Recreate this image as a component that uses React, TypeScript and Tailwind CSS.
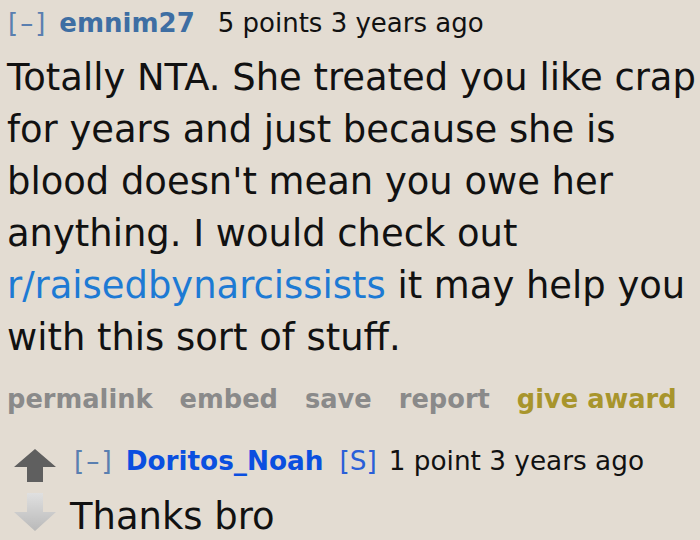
import React from "react";

const font = { fontFamily: '"DejaVu Sans", Verdana, sans-serif' };

export default function App() {
  return (
    <div
      className="w-[700px] h-[540px] overflow-hidden bg-[#e3dcd2] text-[#111]"
      style={font}
    >
      <div className="pl-[8px] pt-[5px]">
        <div className="flex items-baseline text-[26px] leading-[36px] whitespace-nowrap">
          <span className="text-[#5a7fb0] tracking-[2px]">[–]</span>
          <span className="ml-[12px] font-bold text-[#3e6ea3]">emnim27</span>
          <span className="ml-[23px] text-[#111]">5 points 3 years ago</span>
        </div>
        <p className="mt-[11px] text-[36.9px] leading-[52px] w-[696px] -ml-[1px]">
          Totally NTA. She treated you like crap for years and just because she is
          blood doesn't mean you owe her anything. I would check out{" "}
          <span className="text-[#1d7ad4]">r/raisedbynarcissists</span>{" "}it may help you
          with this sort of stuff.
        </p>
        <div className="mt-[17px] flex gap-[27px] text-[25.7px] font-bold leading-[36px] whitespace-nowrap -ml-[1px]">
          <span className="text-[#8a8a8a]">permalink</span>
          <span className="text-[#8a8a8a]">embed</span>
          <span className="text-[#8a8a8a]">save</span>
          <span className="text-[#8a8a8a]">report</span>
          <span className="text-[#a8952c]">give award</span>
        </div>
      </div>
      <div className="mt-[26px] flex pl-[14px]">
        <div className="flex flex-col items-center w-[42px] pt-[6px] gap-[11px]">
          <svg width="42" height="33" viewBox="0 0 42 33">
            <polygon points="21,0 42,18 29,18 29,33 13,33 13,18 0,18" fill="#5f5f5f" />
          </svg>
          <svg width="42" height="38" viewBox="0 0 42 38">
            <defs>
              <linearGradient id="dg" x1="0" y1="0" x2="0" y2="1">
                <stop offset="0" stopColor="#e0e0e0" />
                <stop offset="1" stopColor="#b9b9b9" />
              </linearGradient>
            </defs>
            <polygon points="13,0 29,0 29,19 42,19 21,38 0,19 13,19" fill="url(#dg)" />
          </svg>
        </div>
        <div className="ml-[18px]">
          <div className="flex items-baseline text-[26.3px] leading-[36px] whitespace-nowrap">
            <span className="text-[#5a7fb0] tracking-[2px]">[–]</span>
            <span className="ml-[12px] font-bold text-[#0a4fe0]">Doritos_Noah</span>
            <span className="ml-[16px] text-[#2a5fd8]">[S]</span>
            <span className="ml-[12px] text-[#111]">1 point 3 years ago</span>
          </div>
          <div className="mt-[12px] text-[36.9px] leading-[52px] -ml-[4px]">Thanks bro</div>
        </div>
      </div>
    </div>
  );
}
